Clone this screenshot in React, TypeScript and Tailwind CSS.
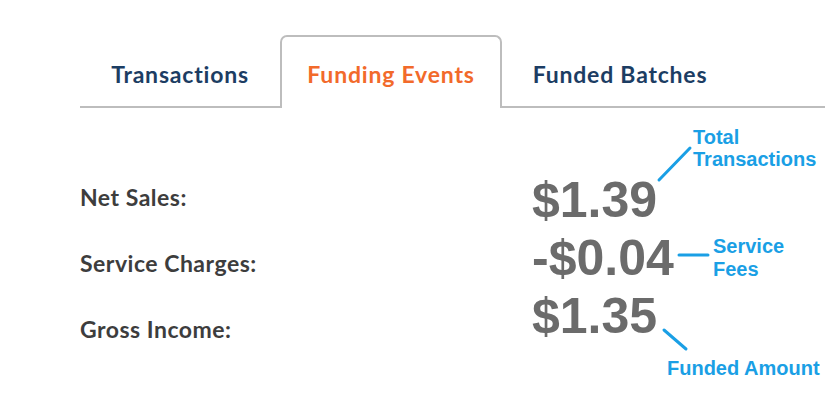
import React from "react";

export default function App() {
  return (
    <div className="relative w-[825px] h-[405px] overflow-hidden bg-white">
      <div className="pt-[35px] pl-[80px]">
        <div className="flex h-[73px] border-b-2 border-[#bdbdbd] font-['Lato',sans-serif] text-[23px] font-bold tracking-[0.8px]">
          <div className="flex w-[200px] items-center justify-center pt-2 text-[#1c3d63]">Transactions</div>
          <div className="-mb-[2px] flex w-[222px] items-center justify-center rounded-t-[7px] border-2 border-b-0 border-[#bdbdbd] bg-white pt-[4px] text-[#f26a2b]">
            Funding Events
          </div>
          <div className="flex w-[236px] items-center justify-center pt-2 text-[#1c3d63]">Funded Batches</div>
        </div>
      </div>

      <div className="flex pl-[80px]">
        <div className="mt-[56px] flex w-[452px] flex-col font-['Lato',sans-serif] text-[23px] font-bold tracking-[0.5px] text-[#3d3d3d]">
          <div className="flex h-[66px] items-center">Net Sales:</div>
          <div className="flex h-[66px] items-center">Service Charges:</div>
          <div className="flex h-[66px] items-center">Gross Income:</div>
        </div>
        <div className="mt-[63px] flex flex-col font-['Liberation_Sans',Arial,sans-serif] text-[50px] font-bold text-[#6b6b6b]">
          <div className="flex h-[58px] items-center">$1.39</div>
          <div className="flex h-[58px] items-center">-$0.04</div>
          <div className="flex h-[58px] items-center">$1.35</div>
        </div>
      </div>

      <svg className="absolute left-0 top-0" width="825" height="405" viewBox="0 0 825 405">
        <g stroke="#1a9fe5" strokeWidth="3" strokeLinecap="round">
          <line x1="659" y1="180" x2="690" y2="148" />
          <line x1="679" y1="255" x2="708" y2="255" />
          <line x1="664" y1="330" x2="686" y2="349" />
        </g>
      </svg>

      <div className="absolute left-[693px] top-[126px] font-['Liberation_Sans',Arial,sans-serif] text-[20px] font-bold leading-[22px] text-[#1a9fe5]">
        Total
        <br />
        Transactions
      </div>
      <div className="absolute left-[713px] top-[235px] font-['Liberation_Sans',Arial,sans-serif] text-[20px] font-bold leading-[23px] text-[#1a9fe5]">
        Service
        <br />
        Fees
      </div>
      <div className="absolute left-[667px] top-[357px] whitespace-nowrap font-['Liberation_Sans',Arial,sans-serif] text-[20px] font-bold leading-[22px] text-[#1a9fe5]">
        Funded Amount
      </div>
    </div>
  );
}
